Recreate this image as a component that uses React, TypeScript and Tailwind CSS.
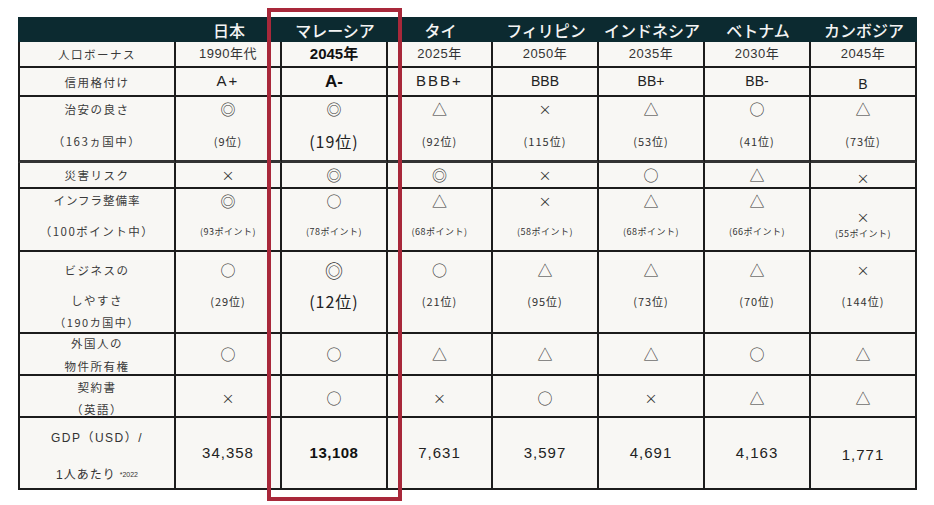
import React from "react";

type Node = React.ReactNode;

const countries = ["日本", "マレーシア", "タイ", "フィリピン", "インドネシア", "ベトナム", "カンボジア"];

const Cell = ({ children, className = "" }: { children?: Node; className?: string }) => (
  <div className={`bg-[#f8f7f4] border-r-2 border-b-2 border-[#1c1c1c] text-[#262626] flex flex-col items-center ${className}`}>
    {children}
  </div>
);

const Label = ({ children, className = "" }: { children?: Node; className?: string }) => (
  <div className={`text-[11.5px] tracking-[1.5px] text-[#3a3a3a] leading-[18px] whitespace-nowrap ${className}`}>{children}</div>
);

const Mark = ({ s, big = false }: { s: string; big?: boolean }) => (
  <span className={`${s === "×" ? "text-[13px]" : big ? "text-[18px]" : "text-[15px]"} leading-[18px] text-[#333]`}>{s}</span>
);

// 数値はArial系、日本語はNoto Sans CJK
const num = "font-['Liberation_Sans','Noto_Sans_CJK_JP',sans-serif]";

const App = () => {
  const chian = ["◎", "◎", "△", "×", "△", "○", "△"];
  const chianRank = ["(9位)", "(19位)", "(92位)", "(115位)", "(53位)", "(41位)", "(73位)"];
  const saigai = ["×", "◎", "◎", "×", "○", "△", "×"];
  const infra = ["◎", "○", "△", "×", "△", "△", "×"];
  const infraPt = ["93", "78", "68", "58", "68", "66", "55"];
  const biz = ["○", "◎", "○", "△", "△", "△", "×"];
  const bizRank = ["(29位)", "(12位)", "(21位)", "(95位)", "(73位)", "(70位)", "(144位)"];
  const gaikoku = ["○", "○", "△", "△", "△", "○", "△"];
  const keiyaku = ["×", "○", "×", "○", "×", "△", "△"];
  const gdp = ["34,358", "13,108", "7,631", "3,597", "4,691", "4,163", "1,771"];
  const years = ["1990年代", "2045年", "2025年", "2050年", "2035年", "2030年", "2045年"];
  const rating = ["A+", "A-", "BBB+", "BBB", "BB+", "BB-", "B"];

  return (
    <div className="relative w-[934px] h-[505px] bg-white overflow-hidden font-['Noto_Sans_CJK_JP','Noto_Sans',sans-serif]">
      <div className="ml-[18px] mt-[17px] w-[899px] grid grid-cols-[158px_106px_106px_105px_106px_106px_106px_106px] grid-rows-[25px_26px_29px_66px_26px_63px_82px_42px_42px_72px]">
        {/* ヘッダー */}
        <div className="bg-[#0c2a30]" />
        {countries.map((c) => (
          <div key={c} className="bg-[#0c2a30] flex items-center justify-center text-[16px] font-medium text-[#f4f4f4] leading-none">
            {c}
          </div>
        ))}

        {/* 人口ボーナス */}
        <Cell className="border-l-2 justify-center"><Label>人口ボーナス</Label></Cell>
        {years.map((y, i) => (
          <Cell key={i} className="justify-center">
            <span className={i === 1 ? `${num} text-[15px] font-bold text-[#111]` : `${num} text-[13px] tracking-[0.5px] text-[#333]`}>{y}</span>
          </Cell>
        ))}

        {/* 信用格付け */}
        <Cell className="border-l-2 justify-center"><Label>信用格付け</Label></Cell>
        {rating.map((r, i) => (
          <Cell key={i} className={i === 6 ? "justify-center pt-[5px]" : "justify-center"}>
            <span
              className={
                i === 1
                  ? `${num} text-[17px] font-bold text-[#111]`
                  : i === 0 || i === 2
                  ? `${num} text-[15px] tracking-[2px] text-[#222]`
                  : `${num} text-[14px] text-[#222]`
              }
            >
              {r}
            </span>
          </Cell>
        ))}

        {/* 治安の良さ */}
        <Cell className="border-l-2 border-b-[3px] border-b-[#333]">
          <div className="h-[26px] flex items-center"><Label>治安の良さ</Label></div>
          <div className="h-[40px] flex items-center"><Label className="tracking-[0px]">（163ヵ国中）</Label></div>
        </Cell>
        {chian.map((s, i) => (
          <Cell key={i} className="border-b-[3px] border-b-[#333]">
            <div className="h-[26px] flex items-center"><Mark s={s} /></div>
            <div className="h-[40px] flex items-center">
              <span className={i === 1 ? "text-[16px] tracking-[1px] text-[#222]" : "text-[11px] tracking-[1px] text-[#333]"}>{chianRank[i]}</span>
            </div>
          </Cell>
        ))}

        {/* 災害リスク */}
        <Cell className="border-l-2 justify-center"><Label>災害リスク</Label></Cell>
        {saigai.map((s, i) => (
          <Cell key={i} className={i === 6 ? "justify-center pt-[5px]" : "justify-center"}><Mark s={s} /></Cell>
        ))}

        {/* インフラ整備率 */}
        <Cell className="border-l-2">
          <div className="h-[24px] flex items-center"><Label className="tracking-[1px]">インフラ整備率</Label></div>
          <div className="h-[40px] flex items-center"><Label className="text-[10.5px] tracking-[0.5px]">（100ポイント中）</Label></div>
        </Cell>
        {infra.map((s, i) =>
          i === 6 ? (
            <Cell key={i}>
              <div className="h-[18px] mt-[19px] flex items-center"><Mark s={s} /></div>
              <div className="h-[16px] flex items-center"><span className="text-[9px] tracking-[0.5px] text-[#333]">({infraPt[i]}ポイント)</span></div>
            </Cell>
          ) : (
            <Cell key={i}>
              <div className="h-[26px] flex items-center"><Mark s={s} /></div>
              <div className="h-[38px] flex items-center"><span className="text-[9px] tracking-[0.5px] text-[#333]">({infraPt[i]}ポイント)</span></div>
            </Cell>
          )
        )}

        {/* ビジネスのしやすさ */}
        <Cell className="border-l-2">
          <div className="h-[36px] flex items-center"><Label>ビジネスの</Label></div>
          <div className="h-[26px] flex items-center"><Label>しやすさ</Label></div>
          <div className="h-[20px] flex items-center"><Label className="text-[11px] tracking-[0.5px]">（190カ国中）</Label></div>
        </Cell>
        {biz.map((s, i) => (
          <Cell key={i}>
            <div className="h-[36px] flex items-center"><Mark s={s} big={i === 1} /></div>
            <div className="h-[26px] flex items-center">
              <span className={i === 1 ? "text-[16px] tracking-[1px] text-[#222]" : "text-[11px] tracking-[1px] text-[#333]"}>{bizRank[i]}</span>
            </div>
          </Cell>
        ))}

        {/* 外国人の物件所有権 */}
        <Cell className="border-l-2">
          <div className="h-[18px] flex items-center"><Label>外国人の</Label></div>
          <div className="h-[18px] mt-[5px] flex items-center"><Label>物件所有権</Label></div>
        </Cell>
        {gaikoku.map((s, i) => (
          <Cell key={i} className="justify-center"><Mark s={s} /></Cell>
        ))}

        {/* 契約書（英語） */}
        <Cell className="border-l-2">
          <div className="h-[18px] mt-[2px] flex items-center"><Label>契約書</Label></div>
          <div className="h-[18px] mt-[4px] flex items-center"><Label className="tracking-[0px]">（英語）</Label></div>
        </Cell>
        {keiyaku.map((s, i) => (
          <Cell key={i} className="justify-center pt-[3px]"><Mark s={s} /></Cell>
        ))}

        {/* GDP */}
        <Cell className="border-l-2">
          <div className="h-[20px] mt-[10px] flex items-center">
            <span className={`${num} text-[12px] tracking-[1.5px] text-[#333]`}>GDP（USD）/</span>
          </div>
          <div className="h-[20px] mt-[17px] flex items-center gap-[4px]">
            <span className={`${num} text-[12px] tracking-[1px] text-[#333]`}>1人あたり</span>
            <span className={`${num} text-[7px] text-[#333]`}>*2022</span>
          </div>
        </Cell>
        {gdp.map((g, i) => (
          <Cell key={i} className={i === 6 ? "justify-center pt-[4px]" : "justify-center"}>
            <span className={i === 1 ? `${num} text-[15px] font-bold tracking-[0.5px] text-[#111]` : `${num} text-[15px] tracking-[1px] text-[#222]`}>{g}</span>
          </Cell>
        ))}
      </div>

      {/* マレーシア強調枠 */}
      <div className="absolute left-[267px] top-[8px] w-[135px] h-[493px] border-4 border-[#a8283a] pointer-events-none" />
    </div>
  );
};

export default App;
